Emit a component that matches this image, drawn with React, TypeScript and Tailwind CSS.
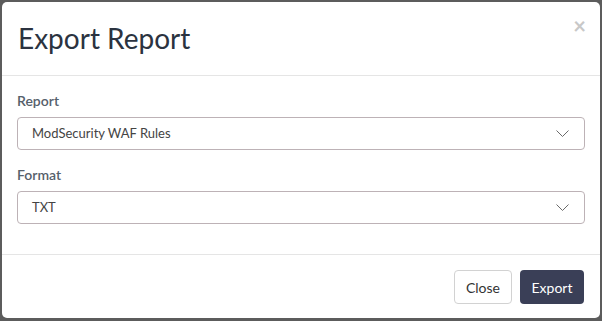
const fields = [
  { label: 'Report', value: 'ModSecurity WAF Rules' },
  { label: 'Format', value: 'TXT' },
];

function Chevron() {
  return (
    <svg width="13" height="7" viewBox="0 0 13 7" fill="none" stroke="#6a6a6a" strokeWidth="1">
      <path d="M0.5 0.5l6 6 6-6" />
    </svg>
  );
}

export default function App() {
  return (
    <div
      className="w-[602px] h-[321px] bg-[#5c5c5c] p-[2px] overflow-hidden"
      style={{ fontFamily: 'Lato, "Noto Sans", sans-serif' }}
    >
      <div className="w-[598px] h-[316px] bg-white rounded-[5px] flex flex-col">
        {/* Header */}
        <div className="h-[74px] border-b border-[#e5e5e5] flex items-start justify-between pl-4 pr-[14px]">
          <h4 className="text-[28px] leading-none text-[#2b3340] mt-[22px]">Export Report</h4>
          <button className="text-[#c8c8c8] text-[22px] font-bold leading-none mt-[13px]">×</button>
        </div>

        {/* Body */}
        <div className="h-[178px] px-[15px] pt-[15px]">
          {fields.map((f, i) => (
            <div key={f.label} className={i === 0 ? 'mb-[15px]' : ''}>
              <label className="block h-[20px] leading-[20px] text-[14px] font-semibold text-[#56606b] mb-[6px]">
                {f.label}
              </label>
              <div className="h-[33px] w-[568px] border border-[#bdb2b6] rounded-[4px] flex items-center justify-between pl-[14px] pr-[15px]">
                <span className="text-[13px] text-[#444]">{f.value}</span>
                <Chevron />
              </div>
            </div>
          ))}
        </div>

        {/* Footer */}
        <div className="flex-1 border-t border-[#e5e5e5] flex justify-end items-start gap-2 pt-[15px] pr-[16px]">
          <button className="h-[34px] w-[58px] rounded-[4px] border border-[#d2d2d2] bg-white text-[14px] text-[#333]">
            Close
          </button>
          <button className="h-[34px] w-[64px] rounded-[4px] bg-[#3a3f57] text-[14px] text-white">
            Export
          </button>
        </div>
      </div>
    </div>
  );
}
